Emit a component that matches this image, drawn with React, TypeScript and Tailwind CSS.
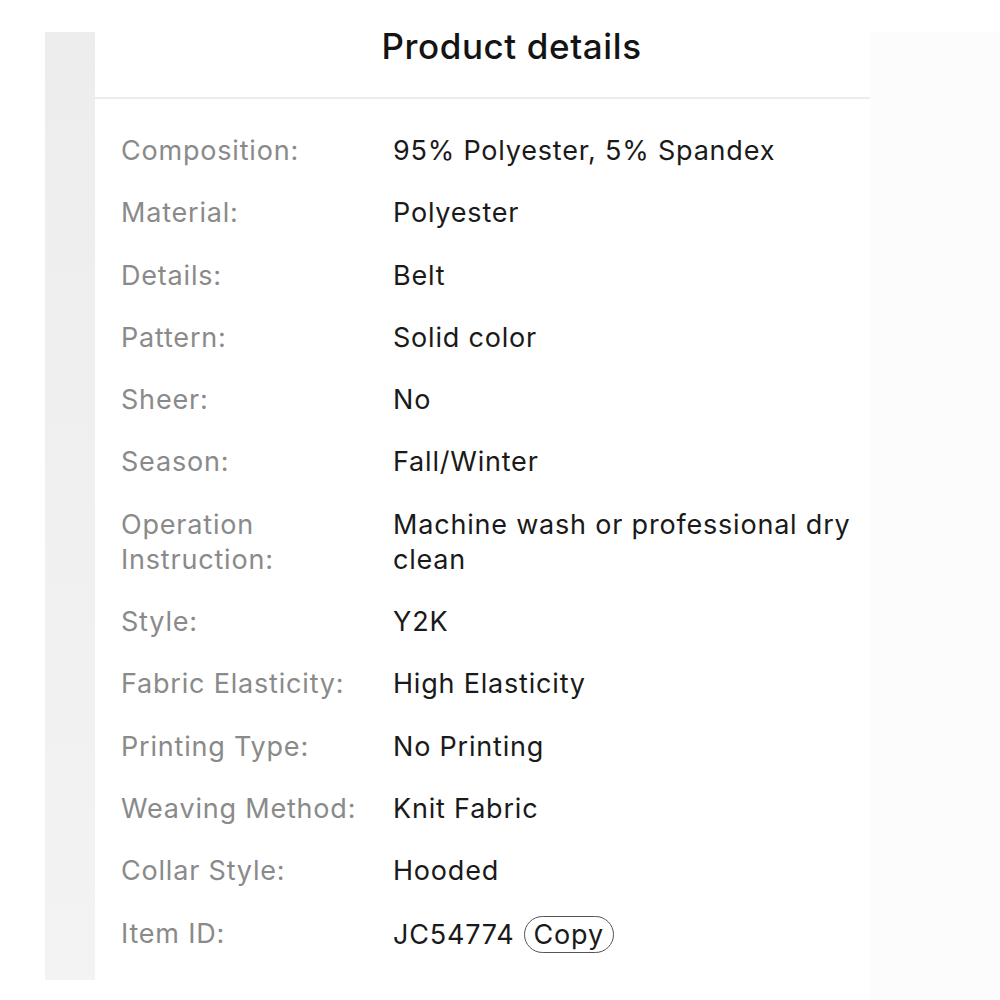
import React from "react";

const rows: [string, string][] = [
  ["Composition:", "95% Polyester, 5% Spandex"],
  ["Material:", "Polyester"],
  ["Details:", "Belt"],
  ["Pattern:", "Solid color"],
  ["Sheer:", "No"],
  ["Season:", "Fall/Winter"],
  ["Operation Instruction:", "Machine wash or professional dry clean"],
  ["Style:", "Y2K"],
  ["Fabric Elasticity:", "High Elasticity"],
  ["Printing Type:", "No Printing"],
  ["Weaving Method:", "Knit Fabric"],
  ["Collar Style:", "Hooded"],
];

export default function App() {
  return (
    <div className="w-[1000px] h-[1000px] bg-white flex overflow-hidden" style={{ fontFamily: "Inter, 'Liberation Sans', sans-serif" }}>
      {/* blurred side strips */}
      <div className="w-[45px] shrink-0" />
      <div className="w-[50px] shrink-0 mt-[32px] h-[948px] bg-gradient-to-b from-[#ededed] to-[#f3f3f3]" />

      <div className="w-[775px] shrink-0 flex flex-col">
        <div className="h-[99px] border-b-2 border-[#ececec] flex items-center justify-center pl-[58px] pb-[5px]">
          <h1 className="text-[35px] font-medium text-[#141414] tracking-[0.6px]">Product details</h1>
        </div>

        <div className="flex flex-col gap-[27.3px] pt-[34px] pl-[26px] pr-[4px] text-[27px] leading-[35px] tracking-[0.8px]">
          {rows.map(([label, value]) => (
            <div key={label} className="flex">
              <div className="w-[272px] shrink-0 pr-[20px] text-[#8a8a8a]">{label}</div>
              <div className="flex-1 text-[#1a1a1a]">{value}</div>
            </div>
          ))}
          <div className="flex">
            <div className="w-[272px] shrink-0 text-[#8a8a8a]">Item ID:</div>
            <div className="flex items-center gap-[9px] text-[#1a1a1a]">
              <span>JC54774</span>
              <button className="h-[37px] px-[9px] rounded-full border-[1.5px] border-[#555555] leading-[33px] text-[#1a1a1a] tracking-[0.8px]">
                Copy
              </button>
            </div>
          </div>
        </div>
      </div>

      <div className="flex-1 mt-[32px] bg-[#fcfcfc]" />
    </div>
  );
}
